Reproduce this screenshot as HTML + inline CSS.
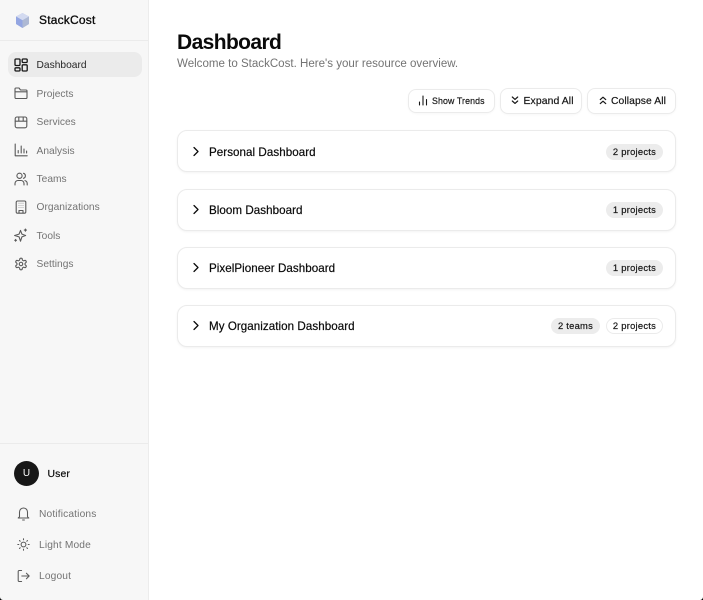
<!DOCTYPE html>
<html lang="en">
<head>
<meta charset="utf-8">
<title>StackCost</title>
<style>
html,body{margin:0;padding:0;background:#fff}
body{width:703px;height:600px;position:relative;overflow:hidden;font-family:"Liberation Sans",sans-serif;color:#0a0a0a}
.t{position:absolute;white-space:nowrap;line-height:1}
#side{position:absolute;left:0;top:0;width:148px;height:600px;background:#f7f7f7;border-right:1px solid #ececec}
.hr{position:absolute;left:0;width:148px;height:1px;background:#ebebeb}
#active{position:absolute;left:8px;top:52px;width:134px;height:25px;border-radius:8px;background:#ebebeb}
.nav{font-size:10.2px;color:#737373;left:36.5px;letter-spacing:.03px}
.nav.b{left:39px;letter-spacing:.15px}
.ic{position:absolute;fill:none;stroke:#595959;stroke-width:1.6;stroke-linecap:round;stroke-linejoin:round}
.card{position:absolute;left:177px;width:497px;height:40px;border:1px solid #ebebeb;border-radius:10px;background:#fff;box-shadow:0 1px 2px rgba(0,0,0,.05)}
.ctitle{font-size:11.6px;color:#0a0a0a;left:209px;letter-spacing:.05px;-webkit-text-stroke:.2px #0a0a0a}
.badge{position:absolute;height:16px;border-radius:8px;background:#ececec;font-size:9.4px;line-height:16px;text-align:center;color:#171717;letter-spacing:.25px;-webkit-text-stroke:.2px #171717;white-space:nowrap}
.badge.o{background:#fff;box-shadow:inset 0 0 0 1px #ebebeb}
.btn{position:absolute;background:#fff;border:1px solid #ebebeb;border-radius:8px;box-shadow:0 1px 2px rgba(0,0,0,.03)}
.bt{color:#171717;-webkit-text-stroke:.2px #171717}
.chev{position:absolute;left:191px;fill:none;stroke:#0a0a0a;stroke-width:1.25;stroke-linecap:round;stroke-linejoin:round}
</style>
</head>
<body>
<div id="side">
  <div class="hr" style="top:40px"></div>
  <div class="hr" style="top:443px"></div>
</div>

<svg style="position:absolute;left:15px;top:12px" width="15" height="17" viewBox="0 0 15 17">
  <path d="M7.5 1L14 4.5V12L7.5 16L1 12V4.5Z" fill="#b9c5ea"/>
  <path d="M7.5 1L14 4.5L7.5 8.2L1 4.5Z" fill="#d3daf0"/>
  <path d="M1 4.5L7.5 8.2V16L1 12Z" fill="#94a6e2"/>
  <path d="M7.5 8.2L14 4.5V12L7.5 16Z" fill="#aeb9d4"/>
</svg>
<div class="t" style="left:39px;top:14px;font-size:12px;letter-spacing:.2px;-webkit-text-stroke:.3px #0a0a0a">StackCost</div>

<div id="active"></div>

<svg class="ic" style="left:14px;top:58px;stroke:#171717;stroke-width:1.3" width="14" height="14" viewBox="0 0 14 14"><rect x="1" y="1" width="5" height="6.5" rx="1"/><rect x="8.2" y="1" width="5" height="3.5" rx="1"/><rect x="8.2" y="6.8" width="5" height="6.2" rx="1"/><rect x="1" y="9.8" width="5" height="3.2" rx="1"/></svg>
<div class="t nav" style="top:61px;color:#262626">Dashboard</div>

<svg class="ic" style="left:14px;top:86px;stroke-width:1.1" width="14" height="14" viewBox="0 0 14 14"><path d="M1 3a1 1 0 0 1 1-1h3l1.5 2H12a1 1 0 0 1 1 1v6.5a1 1 0 0 1-1 1H2a1 1 0 0 1-1-1Z"/><path d="M1 5.8H13"/></svg>
<div class="t nav" style="top:90px">Projects</div>

<svg class="ic" style="left:14px;top:114.5px;stroke-width:1.1" width="14" height="14" viewBox="0 0 14 14"><rect x="1.2" y="2" width="11.6" height="10.8" rx="1.8"/><path d="M1.2 6.2H12.8M4.8 2V6.2M9.2 2V6.2"/></svg>
<div class="t nav" style="top:117.5px">Services</div>

<svg class="ic" style="left:14px;top:143px;stroke-width:1.1" width="14" height="14" viewBox="0 0 14 14"><path d="M1.2 1V12.8H13.2"/><path d="M4.2 10V7.5M7.2 10V3M10 10V6M12.6 10V8"/></svg>
<div class="t nav" style="top:147px">Analysis</div>

<svg class="ic" style="left:14px;top:171.5px;stroke-width:1.1" width="14" height="14" viewBox="0 0 14 14"><circle cx="5.5" cy="3.8" r="2.6"/><path d="M1 13V11.5a3 3 0 0 1 3-3h3a3 3 0 0 1 3 3V13"/><path d="M9.5 1.3a2.6 2.6 0 0 1 0 5"/><path d="M11 8.6a3 3 0 0 1 2.2 2.9V13"/></svg>
<div class="t nav" style="top:174.5px">Teams</div>

<svg class="ic" style="left:14px;top:200px;stroke-width:1.1" width="14" height="14" viewBox="0 0 14 14"><rect x="2.2" y="1" width="9.6" height="12.2" rx="1.3"/><path d="M5 13V10.5H9V13"/><path stroke-width=".8" d="M5 3.2h.01M7 3.2h.01M9 3.2h.01M5 5.4h.01M7 5.4h.01M9 5.4h.01M5 7.6h.01M7 7.6h.01M9 7.6h.01"/></svg>
<div class="t nav" style="top:203px">Organizations</div>

<svg class="ic" style="left:13px;top:228px;stroke-width:1.1" width="15" height="15" viewBox="0 0 15 15"><path d="M7.5 2.4L8.9 6.1L12.6 7.5L8.9 8.9L7.5 13.2L6.1 8.9L1.6 7.5L6.1 6.1Z"/><path d="M12.4 1V3.2M11.3 2.1H13.5M2.6 11.4V13.2M1.7 12.3H3.5"/></svg>
<div class="t nav" style="top:231.5px">Tools</div>

<svg class="ic" style="left:14px;top:256.5px" width="14" height="14" viewBox="0 0 24 24"><path stroke-width="1.9" d="M12.2 2h-.4a2 2 0 0 0-2 2v.2a2 2 0 0 1-1 1.7l-.4.3a2 2 0 0 1-2 0l-.2-.1a2 2 0 0 0-2.7.7l-.2.4a2 2 0 0 0 .7 2.7l.2.1a2 2 0 0 1 1 1.7v.5a2 2 0 0 1-1 1.8l-.2.1a2 2 0 0 0-.7 2.7l.2.4a2 2 0 0 0 2.7.7l.2-.1a2 2 0 0 1 2 0l.4.3a2 2 0 0 1 1 1.7v.2a2 2 0 0 0 2 2h.4a2 2 0 0 0 2-2v-.2a2 2 0 0 1 1-1.7l.4-.3a2 2 0 0 1 2 0l.2.1a2 2 0 0 0 2.7-.7l.2-.4a2 2 0 0 0-.7-2.7l-.2-.1a2 2 0 0 1-1-1.8v-.5a2 2 0 0 1 1-1.7l.2-.1a2 2 0 0 0 .7-2.7l-.2-.4a2 2 0 0 0-2.7-.7l-.2.1a2 2 0 0 1-2 0l-.4-.3a2 2 0 0 1-1-1.7V4a2 2 0 0 0-2-2Z"/><circle stroke-width="1.9" cx="12" cy="12" r="3"/></svg>
<div class="t nav" style="top:260px">Settings</div>

<div style="position:absolute;left:14px;top:461px;width:25px;height:25px;border-radius:50%;background:#171717;color:#fff;font-size:10px;line-height:25px;text-align:center">U</div>
<div class="t" style="left:47.5px;top:470px;font-size:10.4px;color:#0a0a0a;letter-spacing:.15px;-webkit-text-stroke:.2px #0a0a0a">User</div>

<svg class="ic" style="left:17px;top:506px;stroke-width:1.05" width="13" height="15" viewBox="0 0 13 15"><path d="M2.5 10.8V6a4 4 0 0 1 8 0v4.8L11.8 12H1.2Z"/><path d="M5.6 14h1.8"/></svg>
<div class="t nav b" style="top:510px">Notifications</div>

<svg class="ic" style="left:17px;top:538px;stroke-width:1.05" width="13" height="13" viewBox="0 0 13 13"><circle cx="6.5" cy="6.5" r="2.4"/><path d="M6.5 .8V1.8M6.5 11.2V12.2M.8 6.5H1.8M11.2 6.5H12.2M2.5 2.5L3.2 3.2M9.8 9.8L10.5 10.5M2.5 10.5L3.2 9.8M9.8 3.2L10.5 2.5"/></svg>
<div class="t nav b" style="top:541px">Light Mode</div>

<svg class="ic" style="left:17px;top:569px;stroke-width:1.05" width="13" height="14" viewBox="0 0 13 14"><path d="M4.6 1.5H2.2a1 1 0 0 0-1 1v9a1 1 0 0 0 1 1h2.4"/><path d="M4.8 7H12.2M9.4 4.2L12.2 7L9.4 9.8"/></svg>
<div class="t nav b" style="top:572px">Logout</div>

<div class="t" style="left:177px;top:32px;font-size:21px;font-weight:700;letter-spacing:-.6px;color:#0a0a0a">Dashboard</div>
<div class="t" style="left:177px;top:58.5px;font-size:11.55px;color:#737373;letter-spacing:0">Welcome to StackCost. Here's your resource overview.</div>

<div class="btn" style="left:408px;top:89px;width:85px;height:22px"></div>
<svg class="ic" style="left:418px;top:95px;stroke:#171717;stroke-width:1.1" width="10" height="11" viewBox="0 0 10 11"><path d="M1.5 10V7M5 10V1M8.5 10V4.5"/></svg>
<div class="t bt" style="left:432px;top:96.5px;font-size:8.8px;letter-spacing:.12px">Show Trends</div>

<div class="btn" style="left:500px;top:88px;width:80px;height:24px"></div>
<svg class="ic" style="left:510px;top:95px;stroke:#171717;stroke-width:1.2" width="10" height="11" viewBox="0 0 10 11"><path d="M2.3 2L5 4.4L7.7 2M2.3 6L5 8.4L7.7 6"/></svg>
<div class="t bt" style="left:523.5px;top:96.5px;font-size:10.4px;letter-spacing:.1px">Expand All</div>

<div class="btn" style="left:587px;top:88px;width:87px;height:24px"></div>
<svg class="ic" style="left:598px;top:95px;stroke:#171717;stroke-width:1.2" width="10" height="11" viewBox="0 0 10 11"><path d="M2.3 4.6L5 2.2L7.7 4.6M2.3 8.6L5 6.2L7.7 8.6"/></svg>
<div class="t bt" style="left:611px;top:96.5px;font-size:10.3px;letter-spacing:.1px">Collapse All</div>

<div class="card" style="top:130px"></div>
<svg class="chev" style="top:146px" width="10" height="11" viewBox="0 0 10 11"><path d="M3 1.5L7 5.5L3 9.5"/></svg>
<div class="t ctitle" style="top:147px">Personal Dashboard</div>
<div class="badge" style="left:606px;top:143.5px;width:57px">2 projects</div>

<div class="card" style="top:188.5px"></div>
<svg class="chev" style="top:204px" width="10" height="11" viewBox="0 0 10 11"><path d="M3 1.5L7 5.5L3 9.5"/></svg>
<div class="t ctitle" style="top:205px">Bloom Dashboard</div>
<div class="badge" style="left:606px;top:202px;width:57px">1 projects</div>

<div class="card" style="top:246.5px"></div>
<svg class="chev" style="top:262px" width="10" height="11" viewBox="0 0 10 11"><path d="M3 1.5L7 5.5L3 9.5"/></svg>
<div class="t ctitle" style="top:263px">PixelPioneer Dashboard</div>
<div class="badge" style="left:606px;top:260px;width:57px">1 projects</div>

<div class="card" style="top:305px"></div>
<svg class="chev" style="top:320px" width="10" height="11" viewBox="0 0 10 11"><path d="M3 1.5L7 5.5L3 9.5"/></svg>
<div class="t ctitle" style="top:321px">My Organization Dashboard</div>
<div class="badge" style="left:551px;top:318px;width:49px">2 teams</div>
<div class="badge o" style="left:606px;top:318px;width:57px">2 projects</div>

<svg style="position:absolute;left:0;top:597px" width="3" height="3" viewBox="0 0 3 3"><path d="M0 0A3 3 0 0 0 3 3H0Z" fill="#000"/></svg>
<svg style="position:absolute;left:700px;top:597px" width="3" height="3" viewBox="0 0 3 3"><path d="M3 0A3 3 0 0 1 0 3H3Z" fill="#000"/></svg>
</body>
</html>
